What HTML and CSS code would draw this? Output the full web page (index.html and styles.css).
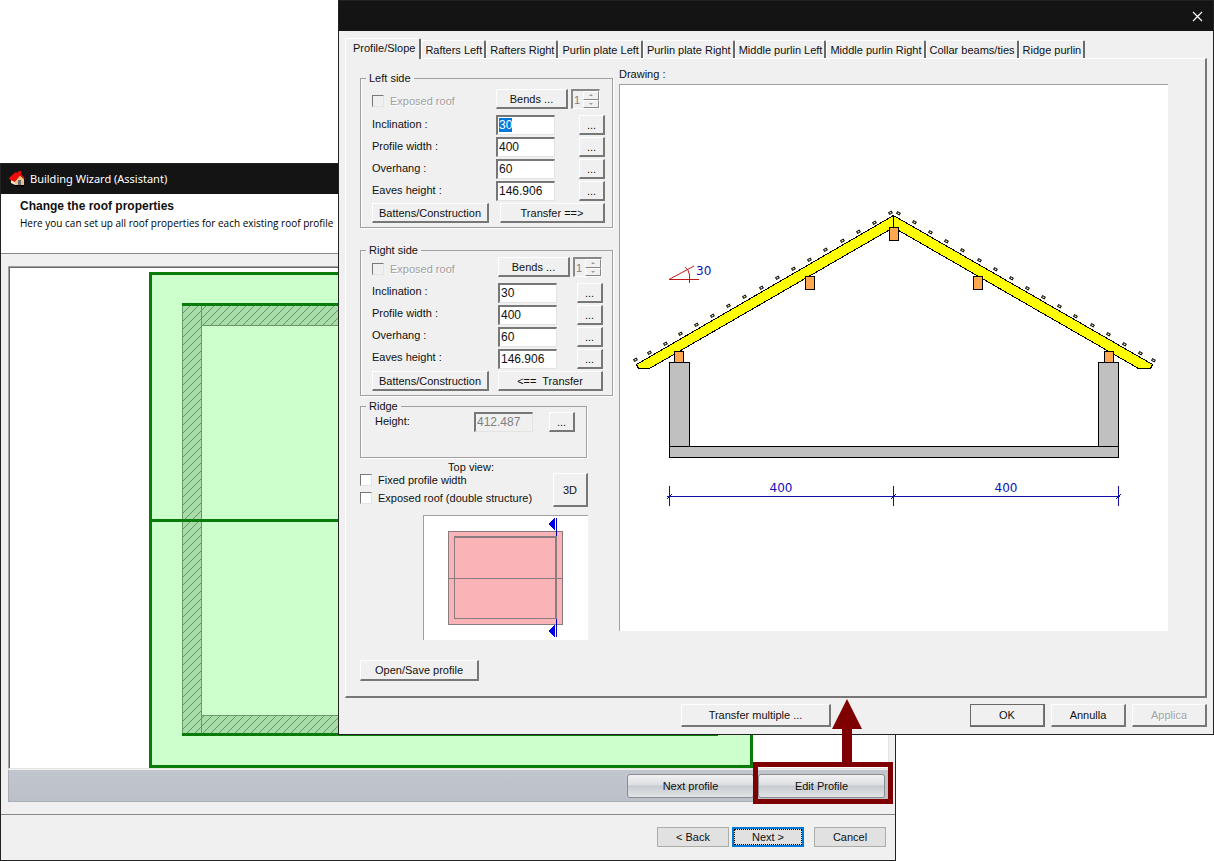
FILE: index.html
```html
<!DOCTYPE html>
<html lang="en">
<head>
<meta charset="utf-8">
<title>Building Wizard (Assistant)</title>
<link rel="stylesheet" href="styles.css">
</head>
<body>
<main class="desktop">

<section class="window wizard" aria-label="Building Wizard">
  <header class="titlebar">
    <svg class="app-icon" width="16" height="16" viewBox="0 0 16 16" aria-hidden="true">
      <path d="M3 13L7 15.500H15V14H7L3 12Z" fill="#000"/>
      <path d="M2 8L6 10V14L2 12Z" fill="#f4e4c0"/>
      <path d="M6 10L11 4.500L15 8V14H6Z" fill="#f0c080"/>
      <path d="M9 9H12V14H9Z" fill="#6a6a78"/>
      <path d="M0 7L6 1.500H9.500V0H12V3L15.500 7V8L11 4.500L5.500 11L0 8Z" fill="#f00c0c"/>
    </svg>
    <span class="title">Building Wizard (Assistant)</span>
  </header>
  <div class="intro">
    <h1>Change the roof properties</h1>
    <p>Here you can set up all roof properties for each existing roof profile</p>
  </div>
  <div class="wizard-body">
    <div class="plan">
      <svg viewBox="10 268 878 500" preserveAspectRatio="xMinYMin meet" shape-rendering="crispEdges" role="img" aria-label="Roof plan">
        <defs>
          <pattern id="hatch" width="8" height="8" patternUnits="userSpaceOnUse">
            <rect width="8" height="8" fill="#a8dca8"/>
            <path d="M-1 9L9 -1M-1 1L1 -1M7 9L9 7" stroke="#5f9a63" stroke-width="1" shape-rendering="auto"/>
          </pattern>
        </defs>
        <rect x="150.500" y="273.500" width="601" height="493" fill="#ccffcc" stroke="#087c08" stroke-width="3"/>
        <rect x="182" y="303" width="536" height="432" fill="url(#hatch)"/>
        <rect x="201.500" y="325.500" width="498" height="390" fill="#ccffcc" stroke="#6a966a"/>
        <path d="M182.500 306V733M201.500 306V326M201.500 715V733M699.500 306V326M699.500 715V733M717.500 306V733" stroke="#6a966a"/>
        <path d="M182 304.500H718M182 734.500H718M150 520.500H752" stroke="#087c08" stroke-width="3"/>
      </svg>
    </div>
    <div class="toolbar">
      <button type="button" class="glossy">Next profile</button>
      <div class="marked">
        <button type="button" class="glossy">Edit Profile</button>
        <span class="marker"></span>
        <svg class="arrow" width="30" height="64" viewBox="0 0 30 64" aria-hidden="true">
          <path d="M15 0L30 30H20V64H10V30H0Z" fill="#7f0000"/>
        </svg>
      </div>
    </div>
  </div>
  <footer class="wizard-nav">
    <button type="button" class="flat">&lt; Back</button>
    <button type="button" class="flat current">Next &gt;</button>
    <button type="button" class="flat cancel">Cancel</button>
  </footer>
</section>

<section class="window dialog" aria-label="Profile">
  <header class="titlebar dialog-title">
    <button type="button" class="close" aria-label="Close">
      <svg width="11" height="11" viewBox="0 0 11 11"><path d="M1 1L10 10M10 1L1 10" stroke="#fff" stroke-width="1.200"/></svg>
    </button>
  </header>

  <div class="dialog-body">
    <nav class="tabs" role="tablist">
      <button type="button" role="tab" class="tab selected" aria-selected="true">Profile/Slope</button>
      <button type="button" role="tab" class="tab">Rafters Left</button>
      <button type="button" role="tab" class="tab">Rafters Right</button>
      <button type="button" role="tab" class="tab">Purlin plate Left</button>
      <button type="button" role="tab" class="tab">Purlin plate Right</button>
      <button type="button" role="tab" class="tab">Middle purlin Left</button>
      <button type="button" role="tab" class="tab">Middle purlin Right</button>
      <button type="button" role="tab" class="tab">Collar beams/ties</button>
      <button type="button" role="tab" class="tab">Ridge purlin</button>
    </nav>

    <div class="panel">
      <div class="settings">
        <fieldset class="group left-side">
          <legend>Left side</legend>
          <div class="row top-row">
            <label class="check disabled"><input type="checkbox" disabled>Exposed roof</label>
            <button type="button" class="btn bends">Bends ...</button>
            <span class="spinner">
              <input type="text" value="1" disabled aria-label="Left bends">
              <span class="steps"><button type="button" class="up" disabled aria-label="Increase"></button><button type="button" class="down" disabled aria-label="Decrease"></button></span>
            </span>
          </div>
          <div class="row"><label for="l-inc">Inclination :</label><input class="field" id="l-inc" type="text" value="30"><button type="button" class="btn more">...</button></div>
          <div class="row"><label for="l-wid">Profile width :</label><input class="field" id="l-wid" type="text" value="400"><button type="button" class="btn more">...</button></div>
          <div class="row"><label for="l-ovh">Overhang :</label><input class="field" id="l-ovh" type="text" value="60"><button type="button" class="btn more">...</button></div>
          <div class="row"><label for="l-eav">Eaves height :</label><input class="field" id="l-eav" type="text" value="146.906"><button type="button" class="btn more">...</button></div>
          <div class="actions"><button type="button" class="btn battens">Battens/Construction</button><button type="button" class="btn transfer">Transfer ==&gt;</button></div>
        </fieldset>

        <fieldset class="group right-side">
          <legend>Right side</legend>
          <div class="row top-row">
            <label class="check disabled"><input type="checkbox" disabled>Exposed roof</label>
            <button type="button" class="btn bends">Bends ...</button>
            <span class="spinner">
              <input type="text" value="1" disabled aria-label="Right bends">
              <span class="steps"><button type="button" class="up" disabled aria-label="Increase"></button><button type="button" class="down" disabled aria-label="Decrease"></button></span>
            </span>
          </div>
          <div class="row"><label for="r-inc">Inclination :</label><input class="field" id="r-inc" type="text" value="30"><button type="button" class="btn more">...</button></div>
          <div class="row"><label for="r-wid">Profile width :</label><input class="field" id="r-wid" type="text" value="400"><button type="button" class="btn more">...</button></div>
          <div class="row"><label for="r-ovh">Overhang :</label><input class="field" id="r-ovh" type="text" value="60"><button type="button" class="btn more">...</button></div>
          <div class="row"><label for="r-eav">Eaves height :</label><input class="field" id="r-eav" type="text" value="146.906"><button type="button" class="btn more">...</button></div>
          <div class="actions"><button type="button" class="btn battens">Battens/Construction</button><button type="button" class="btn transfer">&lt;==&nbsp; Transfer</button></div>
        </fieldset>

        <fieldset class="group ridge">
          <legend>Ridge</legend>
          <div class="row"><label for="ridge-h">Height:</label><input class="field" id="ridge-h" type="text" value="412.487" disabled><button type="button" class="btn more">...</button></div>
        </fieldset>

        <div class="view-options">
          <div class="option-list">
            <span class="caption">Top view:</span>
            <label class="check"><input type="checkbox">Fixed profile width</label>
            <label class="check"><input type="checkbox">Exposed roof (double structure)</label>
          </div>
          <button type="button" class="btn three-d">3D</button>
        </div>

        <div class="thumb">
          <svg viewBox="424 516 164 124" shape-rendering="crispEdges" role="img" aria-label="Top view">
            <rect x="448.500" y="531.500" width="114" height="93" fill="#fab4b7" stroke="#8a7c7e"/>
            <path d="M448 578.500H562M454.500 536V618.500H556" fill="none" stroke="#8a7c7e"/>
            <path d="M454 537H556V619" fill="none" stroke="#8a7c7e" stroke-width="2"/>
            <path d="M556.500 518V536M556.500 619V637" stroke="#0000a8"/>
            <path d="M548 524L555 517V531ZM548 631L555 624V638Z" fill="#0000e8"/>
          </svg>
        </div>

        <button type="button" class="btn open-save">Open/Save profile</button>
      </div>

      <div class="drawing">
        <span class="drawing-label">Drawing :</span>
        <div class="canvas">
          <svg viewBox="620 85 548 546" role="img" aria-label="Roof cross section">
            <defs><rect id="b" x="-1" y="-1" width="3" height="2" fill="#ffffb0" stroke="#000"/></defs>
            <g shape-rendering="crispEdges" stroke="#000">
              <path d="M893.500 215.500L636.500 364.500L638.500 368.500H649.500L893.500 227.500L1138.500 368.500H1150.500L1152.500 364.500Z" fill="#ffff00"/>
              <path d="M893.500 215V228"/>
              <g fill="#ffa850">
                <rect x="889.500" y="227.500" width="9" height="13"/>
                <rect x="805.500" y="276.500" width="9" height="13"/>
                <rect x="973.500" y="276.500" width="9" height="13"/>
                <rect x="674.500" y="351.500" width="9" height="11"/>
                <rect x="1104.500" y="351.500" width="9" height="11"/>
              </g>
              <g fill="#c0c0c0">
                <rect x="669.500" y="362.500" width="20" height="84"/>
                <rect x="1098.500" y="362.500" width="20" height="84"/>
                <rect x="669.500" y="446.500" width="449" height="11"/>
              </g>
            </g>
            <g class="battens-left">
              <use href="#b" transform="translate(635 360) rotate(-30)"/><use href="#b" transform="translate(649 353) rotate(-30)"/><use href="#b" transform="translate(665 344) rotate(-30)"/><use href="#b" transform="translate(680 334) rotate(-30)"/><use href="#b" transform="translate(696 325) rotate(-30)"/><use href="#b" transform="translate(712 316) rotate(-30)"/><use href="#b" transform="translate(728 306) rotate(-30)"/><use href="#b" transform="translate(744 297) rotate(-30)"/><use href="#b" transform="translate(761 288) rotate(-30)"/><use href="#b" transform="translate(777 278) rotate(-30)"/><use href="#b" transform="translate(793 269) rotate(-30)"/><use href="#b" transform="translate(809 260) rotate(-30)"/><use href="#b" transform="translate(825 250) rotate(-30)"/><use href="#b" transform="translate(842 241) rotate(-30)"/><use href="#b" transform="translate(858 232) rotate(-30)"/><use href="#b" transform="translate(874 223) rotate(-30)"/><use href="#b" transform="translate(890 213) rotate(-30)"/>
            </g>
            <g class="battens-right">
              <use href="#b" transform="translate(898 213) rotate(30)"/><use href="#b" transform="translate(914 222) rotate(30)"/><use href="#b" transform="translate(930 232) rotate(30)"/><use href="#b" transform="translate(946 241) rotate(30)"/><use href="#b" transform="translate(962 250) rotate(30)"/><use href="#b" transform="translate(979 260) rotate(30)"/><use href="#b" transform="translate(995 269) rotate(30)"/><use href="#b" transform="translate(1011 278) rotate(30)"/><use href="#b" transform="translate(1027 288) rotate(30)"/><use href="#b" transform="translate(1043 297) rotate(30)"/><use href="#b" transform="translate(1059 306) rotate(30)"/><use href="#b" transform="translate(1075 316) rotate(30)"/><use href="#b" transform="translate(1092 325) rotate(30)"/><use href="#b" transform="translate(1108 334) rotate(30)"/><use href="#b" transform="translate(1124 344) rotate(30)"/><use href="#b" transform="translate(1140 353) rotate(30)"/><use href="#b" transform="translate(1153 360) rotate(30)"/>
            </g>
            <path d="M669 279.500H699M669 279.500L694 266M689.500 283V275Q689 270 685 267" fill="none" stroke="#c01818"/>
            <path d="M667 496.500H1120M669.500 486V506M893.500 486V506M1118.500 486V506M667 499L672 494M891 499L896 494M1116 499L1121 494" fill="none" stroke="#1010a8"/>
            <g class="dim">
              <text x="696" y="275">30</text>
              <text x="781" y="492" text-anchor="middle">400</text>
              <text x="1006" y="492" text-anchor="middle">400</text>
            </g>
          </svg>
        </div>
      </div>
    </div>

    <footer class="dialog-actions">
      <button type="button" class="btn multi">Transfer multiple ...</button>
      <button type="button" class="btn std default">OK</button>
      <button type="button" class="btn std">Annulla</button>
      <button type="button" class="btn std" disabled>Applica</button>
    </footer>
  </div>
</section>

</main>
<script src="main.js"></script>
</body>
</html>
```
FILE: main.js
```js
// The first value of the active page starts out selected.
document.getElementById("l-inc").select();
```
FILE: styles.css
```css
* { box-sizing: border-box; }

body {
  margin: 0;
  background: #fff;
  color: #101010;
  font: 11px/14px "Liberation Sans", Arial, sans-serif;
}

button, input {
  font: inherit;
  color: inherit;
  margin: 0;
}

button { padding: 0; white-space: nowrap; }

.desktop { position: relative; min-height: 100vh; }

.window { position: absolute; background: #f0f0f0; border: 1px solid #222; }

.titlebar {
  display: flex;
  align-items: center;
  gap: 5px;
  height: 30px;
  padding: 0 8px;
  background: #141414;
  color: #fff;
}

.title { font: 11px/16px "Noto Sans", "Open Sans", sans-serif; }

/* Wizard window */
.wizard {
  top: 163px;
  left: 0;
  right: 318px;
  bottom: 0;
  display: flex;
  flex-direction: column;
}

.intro {
  height: 60px;
  padding: 5px 19px;
  background: #fff;
  border-bottom: 1px solid #888;
}

.intro h1 { margin: 0; font-size: 12px; line-height: 14px; }
.intro p { margin: 3px 0 0; font: 10px/14px "Open Sans", sans-serif; color: #000; }

.wizard-body {
  flex: 1;
  display: flex;
  flex-direction: column;
  padding: 12px 6px 12px 7px;
  border-bottom: 1px solid #888;
}

.plan {
  flex: 1;
  min-height: 0;
  overflow: hidden;
  background: #fff;
  border: 1px solid #a0a0a0;
  border-right-color: #e3e3e3;
  border-bottom-color: #e3e3e3;
  box-shadow: inset 1px 1px 0 #696969;
  padding: 1px 0 0 1px;
}

.plan svg { display: block; width: 878px; height: 500px; }

.toolbar {
  display: flex;
  justify-content: flex-end;
  gap: 4px;
  height: 32px;
  margin-top: 1px;
  padding: 4px 3px;
  background: linear-gradient(#c0c5ce, #bbc0c9);
  border: 1px solid #a8aeb6;
  border-top: 0;
}

.glossy {
  width: 127px;
  height: 24px;
  border: 1px solid #8a8c90;
  border-radius: 3px;
  background: linear-gradient(#f2f2f3, #dcdee1 45%, #c6cacf 50%, #e2e4e6);
}

.marked { position: relative; display: flex; }

.marker {
  position: absolute;
  inset: -12px -8px -7px -5px;
  border: 5px solid #7f0000;
  z-index: 2;
}

.arrow { position: absolute; left: 74px; top: -75px; z-index: 2; }

.wizard-nav {
  display: flex;
  justify-content: flex-end;
  gap: 3px;
  padding: 12px 9px 13px;
}

.flat {
  width: 72px;
  height: 20px;
  background: #e1e1e1;
  border: 1px solid #adada8;
}

.flat.current { border: 2px solid #0078d7; outline: 1px dotted #000; outline-offset: -3px; }
.flat.cancel { margin-left: 7px; }

/* Profile dialog */
.dialog { top: 0; left: 338px; right: 0; z-index: 1; }
.dialog-title { justify-content: flex-end; padding: 0 10px; }
.close { display: flex; background: none; border: 0; }
.dialog-body { padding: 7px 6px 7px; }

.tabs { display: flex; align-items: flex-end; padding-left: 1px; }

.tab {
  height: 18px;
  padding: 0 3px;
  background: #f0f0f0;
  border: 1px solid #fff;
  border-right: 2px solid #696969;
  border-bottom: 0;
  border-radius: 2px 2px 0 0;
}

.tab:not(.selected) { padding: 0 2px 0 3px; }

.tab.selected {
  position: relative;
  z-index: 1;
  height: 21px;
  margin: 0 0 -1px -1px;
  padding: 0 4px 3px 7px;
}

.panel {
  display: flex;
  gap: 6px;
  height: 640px;
  padding: 8px 37px 15px 14px;
  border: 1px solid #fff;
  border-right: 2px solid #777;
  border-bottom: 2px solid #777;
}

.settings { flex: none; width: 253px; display: flex; flex-direction: column; align-items: flex-start; padding-top: 5px; }

.group {
  width: 253px;
  min-width: 0;
  margin: 0;
  padding: 0 6px 4px 11px;
  border: 1px solid #a0a0a0;
  box-shadow: inset 1px 0 0 #fff, 1px 1px 0 #fff;
}

.group legend { margin-left: -6px; padding: 0 3px; line-height: 12px; }
.left-side { padding-top: 5px; padding-right: 7px; }
.right-side { margin-top: 16px; padding-top: 1px; padding-right: 9px; }

.row { display: flex; height: 22px; align-items: flex-start; }
.row > label { flex: none; width: 124px; padding-top: 2px; }
.right-side .row > label { width: 126px; }
.right-side .row > label:not(.check) { padding-top: 1px; }
.top-row { height: 26px; }

.row > .check, .right-side .row > .check { padding-top: 6px; }
.check { display: flex; align-items: center; gap: 6px; height: 18px; }
.check.disabled { color: #a0a0a0; text-shadow: 1px 1px 0 #fff; }

.check input {
  appearance: none;
  width: 12px;
  height: 12px;
  background: #fff;
  border: 1px solid #777;
  border-right-color: #e3e3e3;
  border-bottom-color: #e3e3e3;
}

.check.disabled input { background: #f0f0f0; }

.field {
  width: 59px;
  height: 20px;
  padding: 0 1px 2px;
  border: 2px solid #777;
  border-right: 1px solid #e3e3e3;
  border-bottom: 1px solid #e3e3e3;
  background: #fff;
  outline: 0;
  font-size: 12px;
}

.field:disabled { background: #f0f0f0; color: #808080; }
.field::selection { background: #0078d7; color: #fff; }

.btn {
  height: 20px;
  background: #f0f0f0;
  border: 1px solid #fff;
  border-right: 2px solid #777;
  border-bottom: 2px solid #777;
}

.btn:disabled { color: #a0a0a0; text-shadow: 1px 1px 0 #fff; }
.bends { width: 72px; }
.more { width: 26px; margin-left: auto; }

.spinner {
  display: flex;
  width: 29px;
  height: 20px;
  margin-left: 3px;
  border: 2px solid #888;
  border-right: 1px solid #fff;
  border-bottom: 1px solid #fff;
}

.spinner input { width: 10px; padding: 0 1px; border: 0; background: none; color: #808080; }
.steps { flex: 1; display: flex; flex-direction: column; }

.steps button {
  flex: 1;
  display: flex;
  align-items: center;
  justify-content: center;
  background: #f0f0f0;
  border: 1px solid #fff;
  border-right-color: #888;
  border-bottom-color: #888;
}

.steps button::before { content: ""; border: 2px solid transparent; }
.steps .up::before { border-top-width: 0; border-bottom-color: #999; }
.steps .down::before { border-bottom-width: 0; border-top-color: #999; }

.actions { display: flex; justify-content: space-between; }
.battens { width: 117px; }
.transfer { width: 105px; }

.ridge { width: 227px; height: 58px; margin-top: 4px; padding-left: 14px; padding-right: 11px; }
.ridge legend { margin-left: -9px; }
.ridge .row > label { width: 99px; }

.view-options { display: flex; align-items: flex-end; justify-content: space-between; width: 228px; height: 49px; }
.option-list { display: flex; flex-direction: column; }
.caption { align-self: center; margin-bottom: -2px; padding-left: 50px; line-height: 12px; }
.three-d { width: 35px; height: 34px; }

.thumb {
  width: 165px;
  height: 125px;
  margin: 8px 0 0 63px;
  background: #fff;
  border: 1px solid #a0a0a0;
  border-right: 0;
  border-bottom: 0;
}

.thumb svg { display: block; width: 100%; height: 100%; }
.open-save { width: 119px; height: 21px; margin-top: 20px; }

.drawing { flex: 1; display: flex; flex-direction: column; }
.drawing-label { height: 17px; }

.canvas {
  height: 547px;
  background: #fff;
  border: 1px solid #a0a0a0;
  border-right: 0;
  border-bottom: 0;
}

.canvas svg { display: block; width: 100%; height: 100%; }
.dim { fill: #1010b8; font: 12px "DejaVu Sans", sans-serif; }

.dialog-actions { display: flex; justify-content: flex-end; gap: 6px; padding-top: 6px; }
.dialog-actions .btn { height: 23px; }
.multi { width: 150px; margin-right: 133px; }
.std { width: 75px; }
.default { outline: 1px solid #696969; outline-offset: -1px; }
```
